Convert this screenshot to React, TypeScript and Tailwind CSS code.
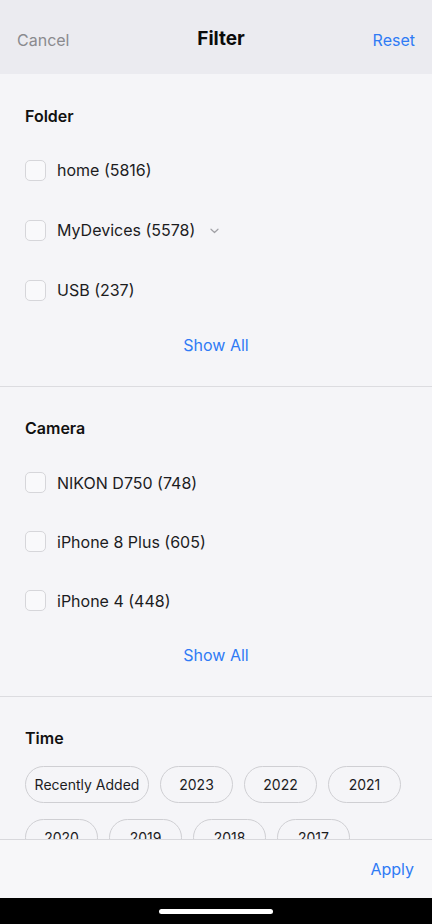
const folders = ["home (5816)", "MyDevices (5578)", "USB (237)"]
const cameras = ["NIKON D750 (748)", "iPhone 8 Plus (605)", "iPhone 4 (448)"]
const years = ["Recently Added", "2023", "2022", "2021", "2020", "2019", "2018", "2017"]

const CheckRow = ({ label, tall, expand }: { label: string; tall?: boolean; expand?: boolean }) => (
  <div className={`flex items-center ${tall ? "h-[60px]" : "h-[59px]"}`}>
    <div className="w-[21px] h-[21px] rounded-[5px] border-[1.5px] border-[#d6d6da] bg-[#f9f9fb]" />
    <span className="ml-[11px] text-[16px] text-[#1c1c1e]">{label}</span>
    {expand && (
      <svg className="ml-[15px] mt-[2px]" width="9" height="6" viewBox="0 0 9 6" fill="none">
        <path d="M1 1.2l3.5 3.3L8 1.2" stroke="#a1a1a6" strokeWidth="1.2" strokeLinecap="round" strokeLinejoin="round" />
      </svg>
    )}
  </div>
)

const Section = ({ title, items, tall }: { title: string; items: string[]; tall?: boolean }) => (
  <section className={`px-[25px] ${tall ? "pt-[30px]" : "pt-[29px]"} pb-[16px] border-b border-[#dcdce0]`}>
    <h2 className="h-6 leading-6 text-[16px] font-semibold text-[#111]">{title}</h2>
    <div className={tall ? "mt-3" : "mt-[13px]"}>
      {items.map((item, i) => (
        <CheckRow key={item} label={item} tall={tall} expand={title === "Folder" && i === 1} />
      ))}
    </div>
    <div className="h-[50px] flex items-center justify-center text-[16px] text-[#2f7bf5]">Show All</div>
  </section>
)

const Chip = ({ label, wide }: { label: string; wide?: boolean }) => (
  <div
    className={`${wide ? "w-[124px]" : "w-[73px]"} shrink-0 h-[37px] rounded-full border border-[#cfcfd3] flex items-center justify-center text-[14px] text-[#1c1c1e]`}
  >
    {label}
  </div>
)

export default function App() {
  return (
    <div
      className="w-[432px] h-[924px] flex flex-col bg-[#f5f5f8] overflow-hidden"
      style={{ fontFamily: "Inter, 'Noto Sans', sans-serif" }}
    >
      {/* Header */}
      <header className="h-[74px] shrink-0 bg-[#ebebf0] flex items-center justify-between px-[17px] pt-[5px]">
        <span className="text-[16px] text-[#8a8a8e]">Cancel</span>
        <span className="text-[19px] font-bold text-[#0b0b0b]">Filter</span>
        <span className="text-[16px] text-[#2f7bf5]">Reset</span>
      </header>

      {/* Scrolling body, cut off by the footer */}
      <main className="flex-1 overflow-hidden">
        <Section title="Folder" items={folders} tall />
        <Section title="Camera" items={cameras} />
        <section className="px-[25px] pt-[29px]">
          <h2 className="h-6 leading-6 text-[16px] font-semibold text-[#111]">Time</h2>
          <div className="mt-4 flex gap-[11px]">
            {years.slice(0, 4).map((y, i) => (
              <Chip key={y} label={y} wide={i === 0} />
            ))}
          </div>
          <div className="mt-4 flex gap-[11px]">
            {years.slice(4).map((y) => (
              <Chip key={y} label={y} />
            ))}
          </div>
        </section>
      </main>

      {/* Footer */}
      <footer className="h-[59px] shrink-0 border-t border-[#d8d8dc] bg-[#f7f7f9] flex items-center justify-end px-[18px]">
        <span className="text-[16px] text-[#2f7bf5]">Apply</span>
      </footer>
      <div className="h-[26px] shrink-0 bg-black flex items-center justify-center">
        <div className="w-[114px] h-[5px] rounded-full bg-white" />
      </div>
    </div>
  )
}
